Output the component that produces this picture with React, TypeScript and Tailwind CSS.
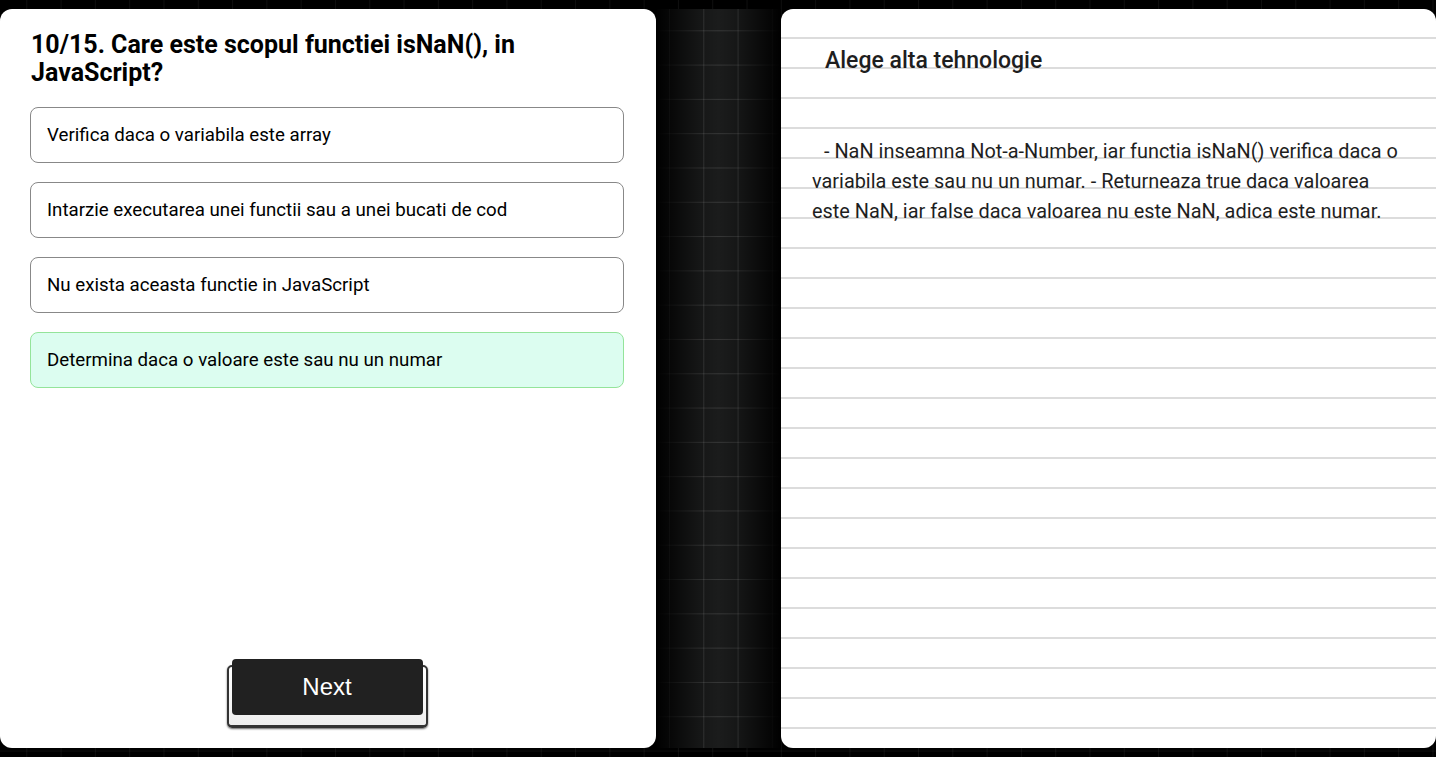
import React from "react";

const options = [
  { text: "Verifica daca o variabila este array", correct: false },
  { text: "Intarzie executarea unei functii sau a unei bucati de cod", correct: false },
  { text: "Nu exista aceasta functie in JavaScript", correct: false },
  { text: "Determina daca o valoare este sau nu un numar", correct: true },
];

export default function App() {
  return (
    <div className="w-full h-[757px] bg-black bg-[image:linear-gradient(to_right,rgba(255,255,255,0.06)_1px,transparent_1px),linear-gradient(to_bottom,rgba(255,255,255,0.06)_1px,transparent_1px)] bg-[size:34.3px_34.3px] bg-[position:-8px_-4px] flex py-[9px] font-['Roboto',sans-serif] overflow-hidden">
      {/* Left panel */}
      <div className="w-[656px] shrink-0 bg-white rounded-[12px] flex flex-col pl-[30px] pr-[32px] pt-[22px] pb-[20px]">
        <h1 className="pl-[1px] text-[25px] leading-[28px] font-bold text-black">
          10/15. Care este scopul functiei isNaN(), in JavaScript?
        </h1>
        <div className="mt-[20px] flex flex-col gap-[19px]">
          {options.map((o) => (
            <div
              key={o.text}
              className={
                o.correct
                  ? "h-[56px] rounded-[8px] border border-[#94e49a] bg-[#dcfdf0] flex items-center px-[16px] pt-[1px] text-[18.7px] text-black"
                  : "h-[56px] rounded-[8px] border border-[#888888] bg-white flex items-center px-[16px] pt-[1px] text-[18.7px] text-black"
              }
            >
              {o.text}
            </div>
          ))}
        </div>
        <div className="flex-1" />
        <div className="self-center mt-[6px] w-[201px] h-[63px] rounded-[5px] bg-[linear-gradient(to_bottom,#ffffff,#eeeeee)] border-2 border-[#333333] border-b-[3px] shadow-[0_1px_2px_rgba(0,0,0,0.6)] flex flex-col">
          <button className="-mt-[8px] mx-[3px] h-[56px] rounded-[4px] bg-[#212121] text-white text-[24px] font-['Liberation_Sans',Arial,sans-serif] flex items-center justify-center">
            Next
          </button>
        </div>
      </div>

      {/* Gutter */}
      <div className="w-[125px] shrink-0 bg-[#1b1c1c] bg-[image:linear-gradient(to_right,rgba(255,255,255,0.13)_1px,transparent_1px),linear-gradient(to_bottom,rgba(255,255,255,0.12)_1px,transparent_1px)] bg-[size:34.3px_34.3px] bg-[position:13px_-13px]">
        <div className="w-full h-full bg-[linear-gradient(to_right,#000000,rgba(0,0,0,0.2)_35%,rgba(0,0,0,0)_50%,rgba(0,0,0,0.2)_65%,#000000)]" />
      </div>

      {/* Right panel */}
      <div className="flex-1 bg-white rounded-[12px] bg-[repeating-linear-gradient(to_bottom,#ffffff_0px,#ffffff_28px,#dcdcdc_28px,#dcdcdc_30px)] pl-[31px] pr-[31px] pt-[37px]">
        <div className="pl-[13px] text-[23px] leading-[30px] font-medium text-[#1e1e1e]">
          Alege alta tehnologie
        </div>
        <p className="mt-[61px] indent-[12px] text-[19.9px] leading-[30px] text-[#1e1e1e]">
          - NaN inseamna Not-a-Number, iar functia isNaN() verifica daca o variabila este sau nu un numar. - Returneaza true daca valoarea este NaN, iar false daca valoarea nu este NaN, adica este numar.
        </p>
      </div>
    </div>
  );
}
